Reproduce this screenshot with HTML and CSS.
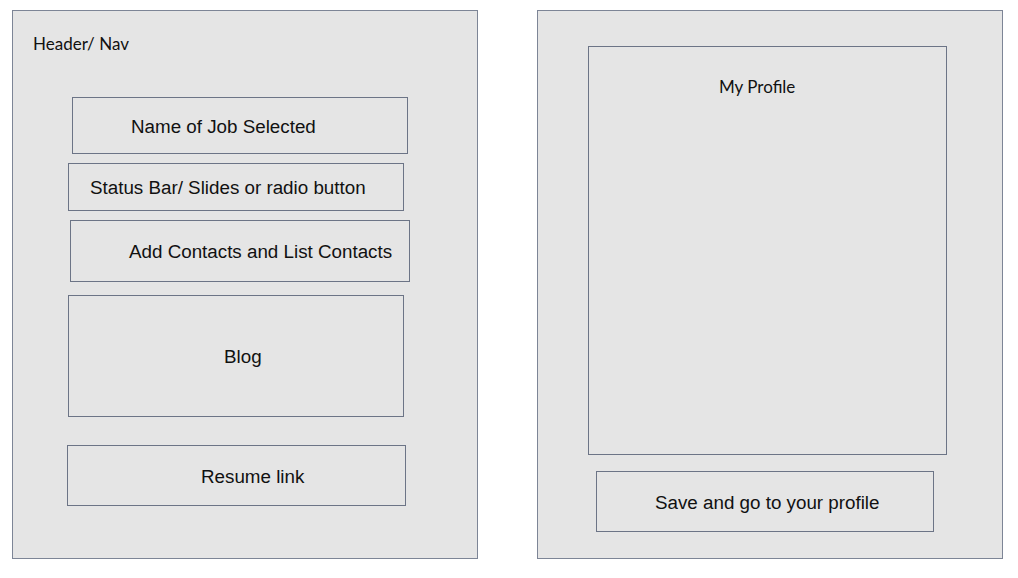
FILE: index.html
```html
<!DOCTYPE html>
<html lang="en">
<head>
<meta charset="utf-8">
<title>Wireframe</title>
<link rel="stylesheet" href="styles.css">
</head>
<body>
<main class="canvas">
  <section class="panel panel-left">
    <div class="label header-label">Header/ Nav</div>
    <div class="box box-job">Name of Job Selected</div>
    <div class="box box-status">Status Bar/ Slides or radio button</div>
    <div class="box box-contacts">Add Contacts and List Contacts</div>
    <div class="box box-blog">Blog</div>
    <div class="box box-resume">Resume link</div>
  </section>
  <section class="panel panel-right">
    <div class="box box-profile"><span class="label">My Profile</span></div>
    <div class="box box-save">Save and go to your profile</div>
  </section>
</main>
</body>
</html>
```

FILE: styles.css
```css
* { box-sizing: border-box; }
html, body { margin: 0; padding: 0; background: #ffffff; }
.canvas {
  display: flex;
  gap: 59px;
  padding: 10px 0 0 12px;
  width: 1018px;
  height: 578px;
}
.panel {
  width: 466px;
  height: 549px;
  background: #e5e5e5;
  border: 1px solid #7d8596;
  display: flex;
  flex-direction: column;
  align-items: flex-start;
}
.label {
  font-family: "Lato", "Open Sans", sans-serif;
  font-size: 17px;
  line-height: 20px;
  color: #111111;
}
.header-label { margin: 23px 0 0 20px; }
.box {
  border: 1px solid #6c7486;
  display: flex;
  align-items: center;
  font-family: "Liberation Sans", Arial, sans-serif;
  font-size: 18.8px;
  line-height: 22px;
  color: #111111;
  white-space: nowrap;
  padding-top: 2px;
}
.box-job { margin: 43px 0 0 59px; width: 336px; height: 57px; padding-left: 58px; }
.box-status { margin: 9px 0 0 55px; width: 336px; height: 48px; padding-left: 21px; }
.box-contacts { margin: 9px 0 0 57px; width: 340px; height: 62px; padding-left: 58px; }
.box-blog { margin: 13px 0 0 55px; width: 336px; height: 122px; padding-left: 155px; }
.box-resume { margin: 28px 0 0 54px; width: 339px; height: 61px; padding-left: 133px; }
.box-profile {
  margin: 35px 0 0 50px;
  width: 359px;
  height: 409px;
  align-items: flex-start;
  padding: 30px 0 0 130px;
}
.box-save { margin: 16px 0 0 58px; width: 338px; height: 61px; padding-left: 58px; }
```
